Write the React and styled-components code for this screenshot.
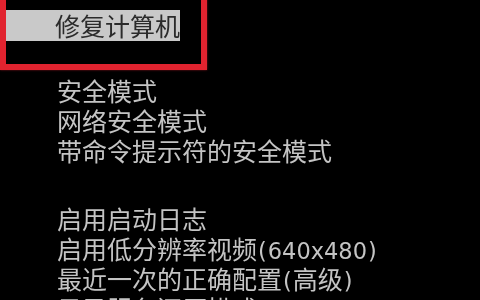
import React from 'react';
import styled, { createGlobalStyle } from 'styled-components';

const GlobalStyle = createGlobalStyle`
  html, body {
    margin: 0;
    padding: 0;
    background: #000;
  }
`;

const Screen = styled.div`
  position: relative;
  width: 480px;
  height: 300px;
  overflow: hidden;
  background: #000;
  font-family: "Noto Sans CJK SC", "DejaVu Sans", sans-serif;
  font-size: 25px;
  filter: blur(0.35px);
`;

const Selected = styled.div`
  margin: 10px 0 0 5px;
  width: 175px;
  height: 31px;
  box-sizing: border-box;
  padding-left: 50px;
  background: #c9c9c9;
  color: #2b2b2b;
  line-height: 31px;
  white-space: nowrap;
`;

const Menu = styled.ul`
  list-style: none;
  margin: 33.5px 0 0;
  padding: 0 0 0 57px;
`;

const Item = styled.li`
  color: #c4c4c4;
  line-height: 30.2px;
  height: ${(p) => (p.$blank ? '37.5px' : '30.2px')};
  white-space: nowrap;
`;

/* latin bits of the boot menu use a wider font than the CJK glyphs */
const Latin = styled.span`
  font-family: "DejaVu Sans", sans-serif;
  font-size: 22.5px;
`;

const Paren = styled(Latin)`
  margin: 0 1px;
`;

const Highlight = styled.div`
  position: absolute;
  top: -10px;
  left: 0;
  width: 207px;
  height: 80px;
  box-sizing: border-box;
  border: 6px solid #e1232f;
  box-shadow: 0 0 2px rgba(225, 35, 47, 0.6);
  pointer-events: none;
`;

const items = [
  '安全模式',
  '网络安全模式',
  '带命令提示符的安全模式',
  '',
  '启用启动日志',
  '启用低分辨率视频(640x480)',
  '最近一次的正确配置(高级)',
  '目录服务还原模式',
];

const renderText = (text) =>
  text.split(/([()]|[0-9x]+)/).map((part, i) => {
    if (part === '(' || part === ')') return <Paren key={i}>{part}</Paren>;
    if (/^[0-9x]+$/.test(part)) return <Latin key={i}>{part}</Latin>;
    return part;
  });

export default function App() {
  return (
    <>
      <GlobalStyle />
      <Screen>
        <Selected>修复计算机</Selected>
        <Menu>
          {items.map((text, i) => (
            <Item key={i} $blank={!text}>
              {renderText(text)}
            </Item>
          ))}
        </Menu>
        <Highlight />
      </Screen>
    </>
  );
}
